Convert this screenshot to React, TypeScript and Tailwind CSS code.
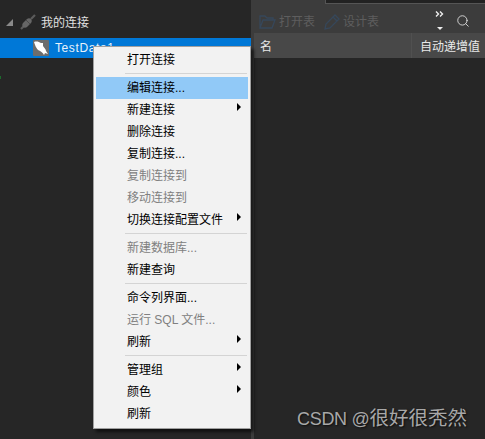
import React from 'react';
import { Search } from 'lucide-react';

const cjk = "font-['Liberation_Sans','Noto_Sans_CJK_SC',sans-serif]";

type Item = { label: string; disabled?: boolean; arrow?: boolean; active?: boolean } | 'sep';

const items: Item[] = [
  { label: '打开连接' },
  'sep',
  { label: '编辑连接...', active: true },
  { label: '新建连接', arrow: true },
  { label: '删除连接' },
  { label: '复制连接...' },
  { label: '复制连接到', disabled: true },
  { label: '移动连接到', disabled: true },
  { label: '切换连接配置文件', arrow: true },
  'sep',
  { label: '新建数据库...', disabled: true },
  { label: '新建查询' },
  'sep',
  { label: '命令列界面...' },
  { label: '运行 SQL 文件...', disabled: true },
  { label: '刷新', arrow: true },
  'sep',
  { label: '管理组', arrow: true },
  { label: '颜色', arrow: true },
  { label: '刷新' },
];

function ContextMenu() {
  return (
    <div className="absolute left-[93px] top-[46px] w-[158px] h-[383px] bg-[#f2f2f2] border border-[#a0a0a0] pt-[2px] px-[2px] shadow-[3px_3px_3px_rgba(0,0,0,0.6)]">
      {items.map((item, i) =>
        item === 'sep' ? (
          <div key={i} className="h-[6px] pt-[2px] pl-[29px] pr-[1px]">
            <div className="h-[1px] w-full bg-[#d4d4d4]" />
          </div>
        ) : (
          <div
            key={i}
            className={`relative h-[22px] flex items-center pl-[31px] text-[12px] leading-none ${
              item.active ? 'bg-[#91c9f7]' : ''
            } ${item.disabled ? 'text-[#808080]' : 'text-black'}`}
          >
            {item.label}
            {item.arrow && (
              <svg className="absolute left-[141px] top-[4px]" width="4" height="8" viewBox="0 0 4 8">
                <path d="M0 0 L4 4 L0 8 Z" fill="#000" />
              </svg>
            )}
          </div>
        )
      )}
    </div>
  );
}

function ConnectionGlyph() {
  return (
    <svg width="16" height="16" viewBox="0 0 16 16">
      <path d="M1 15 L5 11 M11 5 L15 1" stroke="#5a5a5a" strokeWidth="2.2" />
      <path d="M3 9 L7 5 C8 4 10 4 11 5 C12 6 12 8 11 9 L7 13 C6 14 4 14 3 13 C2 12 2 10 3 9 Z" fill="#666666" />
      <path d="M6 6 L10 10" stroke="#4a4a4a" strokeWidth="1" />
    </svg>
  );
}

function MysqlIcon() {
  return (
    <div className="w-[16px] h-[16px] rounded-[1px] bg-[#6d6d6d] overflow-hidden">
      <svg width="16" height="16" viewBox="0 0 16 16">
        <path d="M1 2 C4 1 6 2 8 3 L10 3 L10 6 C11 8 13 9 13 11 L15 14 L12 13 L11 15 C10 13 8 11 5 10 C3 8 2 5 1 2 Z" fill="#ffffff" />
      </svg>
    </div>
  );
}

function Sidebar() {
  return (
    <div className="w-[251px] shrink-0 h-full bg-[#262626] pt-[12px] relative">
      <div className="h-[20px] flex items-center">
        <svg className="ml-[6px]" width="7" height="7" viewBox="0 0 7 7">
          <path d="M7 0 L7 7 L0 7 Z" fill="#8a8a8a" />
        </svg>
        <div className="ml-[7px]">
          <ConnectionGlyph />
        </div>
        <span className="ml-[5px] pt-[1px] text-[12px] text-[#e0e0e0]">我的连接</span>
      </div>
      <div className="mt-[6px] h-[20px] bg-[#0078d7] flex items-center pl-[33px]">
        <MysqlIcon />
        <span className="ml-[6px] text-[12px] text-[#e8f2fb] tracking-[0.6px]">TestData1</span>
      </div>
      <div className="absolute left-0 top-[76px] w-[1px] h-[3px] bg-[#1c6b2c]" />
    </div>
  );
}

function Toolbar() {
  return (
    <div className="h-[33px] flex items-start">
      <div className="ml-[8px] mt-[14px] h-[16px] flex items-center text-[#5e5e5e]">
        <svg width="17" height="14" viewBox="0 0 17 14" fill="none" stroke="#36475a" strokeWidth="1.3">
          <path d="M1 13 V1 H6 L8 3 H14 V5 M1 13 L4 5 H16 L13 13 Z" />
        </svg>
        <span className="ml-[3px] text-[12px]">打开表</span>
      </div>
      <div className="ml-[8px] mt-[14px] h-[16px] flex items-center text-[#5e5e5e]">
        <svg width="17" height="16" viewBox="0 0 17 16" fill="none" stroke="#36475a" strokeWidth="1.3">
          <path d="M2 15 L3 10 L12 1 L16 5 L7 14 Z M10 3 L14 7" />
        </svg>
        <span className="ml-[3px] text-[12px]">设计表</span>
      </div>
      <div className="ml-auto mr-[15px] flex items-start">
        <div className="mt-[11px] flex flex-col items-center w-[9px]">
          <svg width="9" height="6" viewBox="0 0 9 6" fill="none" stroke="#eeeeee" strokeWidth="1.4">
            <path d="M1 0.5 L3.5 3 L1 5.5 M5 0.5 L7.5 3 L5 5.5" />
          </svg>
          <svg className="mt-[10px]" width="6" height="3" viewBox="0 0 6 3">
            <path d="M0 0 H6 L3 3 Z" fill="#eeeeee" />
          </svg>
        </div>
        <Search className="ml-[12px] mt-[14px] text-[#e0e0e0]" size={14} strokeWidth={1.5} />
      </div>
    </div>
  );
}

function RightPanel() {
  return (
    <div className="flex-1 h-full bg-[#3c3c3c] relative flex flex-col">
      <div className="absolute left-[74px] right-0 top-0 h-[4px] bg-[#222222] border-b border-l border-[#555555]" />
      <Toolbar />
      <div className="ml-[3px] h-[25px] bg-[#484848] flex text-[12px] text-[#e8e8e8]">
        <div className="w-[158px] pl-[6px] pt-[2px] flex items-center border-r border-[#505050]">名</div>
        <div className="flex-1 pl-[8px] pt-[2px] flex items-center whitespace-nowrap">自动递增值</div>
      </div>
      <div className="ml-[3px] flex-1 bg-[#262626]" />
    </div>
  );
}

export default function App() {
  return (
    <div className={`relative w-[485px] h-[439px] overflow-hidden flex bg-[#262626] ${cjk}`}>
      <Sidebar />
      <RightPanel />
      <ContextMenu />
      <div className="absolute left-[297px] top-[408px] h-[22px] flex items-center text-[18px] leading-none text-[#a8a8a8] whitespace-nowrap [text-shadow:1px_1px_2px_rgba(0,0,0,0.7)]">
        <span className="tracking-[-0.3px]">CSDN @</span>
        <span className="text-[19.5px]">很好很秃然</span>
      </div>
    </div>
  );
}
